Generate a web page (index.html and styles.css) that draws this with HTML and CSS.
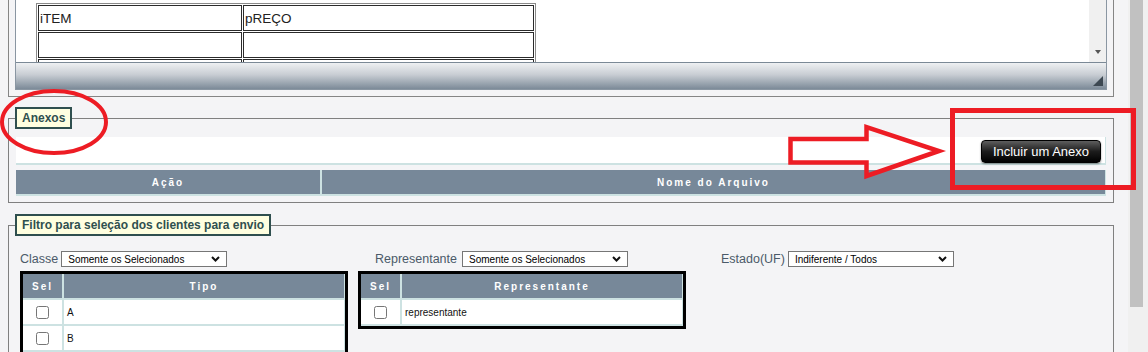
FILE: index.html
```html
<!DOCTYPE html>
<html lang="pt-BR">
<head>
  <meta charset="UTF-8">
  <meta name="viewport" content="width=device-width, initial-scale=1.0">
  <title>Anexos e Filtro</title>
  <link rel="stylesheet" href="styles.css">
</head>
<body>
  <div class="window">
    <div class="page">

      <!-- Editor (scrolled, top cut off) -->
      <div class="editor-frame">
        <div class="editor">
          <div class="editor-body">
            <div class="editor-content">
              <table class="doc-table">
                <tr><td class="doc-item">iTEM</td><td>pREÇO</td></tr>
                <tr><td></td><td></td></tr>
                <tr><td></td><td></td></tr>
              </table>
            </div>
            <div class="editor-scroll"><span class="arrow-down"></span></div>
          </div>
          <div class="editor-bar"><span class="grip"></span></div>
        </div>
      </div>

      <!-- Anexos -->
      <fieldset class="box">
        <legend>Anexos</legend>
        <div class="anexo-bar">
          <button class="btn-dark" type="button">Incluir um Anexo</button>
        </div>
        <table class="grid files">
          <tr><th class="col-acao">Ação</th><th>Nome do Arquivo</th></tr>
        </table>
      </fieldset>

      <!-- Filtro -->
      <fieldset class="box filter">
        <legend>Filtro para seleção dos clientes para envio</legend>
        <div class="filter-grid">
          <div class="filter-col">
            <div class="field">
              <span class="field-label">Classe</span>
              <span class="select-wrap">
                <select class="select"><option>Somente os Selecionados</option></select>
                <svg class="chevron" width="9" height="6" viewBox="0 0 9 6"><path d="M1 1l3.5 3.5L8 1" fill="none" stroke="#111" stroke-width="2"/></svg>
              </span>
            </div>
            <table class="grid pick">
              <tr><th class="col-sel">Sel</th><th>Tipo</th></tr>
              <tr><td class="col-sel"><input type="checkbox"></td><td>A</td></tr>
              <tr><td class="col-sel"><input type="checkbox"></td><td>B</td></tr>
            </table>
          </div>

          <div class="filter-col col-rep">
            <div class="field">
              <span class="field-label">Representante</span>
              <span class="select-wrap">
                <select class="select"><option>Somente os Selecionados</option></select>
                <svg class="chevron" width="9" height="6" viewBox="0 0 9 6"><path d="M1 1l3.5 3.5L8 1" fill="none" stroke="#111" stroke-width="2"/></svg>
              </span>
            </div>
            <table class="grid pick">
              <tr><th class="col-sel">Sel</th><th>Representante</th></tr>
              <tr><td class="col-sel"><input type="checkbox"></td><td>representante</td></tr>
            </table>
          </div>

          <div class="filter-col">
            <div class="field">
              <span class="field-label">Estado(UF)</span>
              <span class="select-wrap">
                <select class="select"><option>Indiferente / Todos</option></select>
                <svg class="chevron" width="9" height="6" viewBox="0 0 9 6"><path d="M1 1l3.5 3.5L8 1" fill="none" stroke="#111" stroke-width="2"/></svg>
              </span>
            </div>
          </div>
        </div>
      </fieldset>

    </div>

    <div class="scrollbar"><div class="thumb"></div></div>

    <!-- Red annotations drawn over the page -->
    <svg class="marks" width="1148" height="352" viewBox="0 0 1148 352">
      <ellipse cx="54" cy="122" rx="52" ry="31" fill="none" stroke="#ed1c24" stroke-width="4"/>
      <polygon points="790.5,139 866.5,139 866.5,127 939,151 866.5,176 866.5,162.5 790.5,162.5" fill="none" stroke="#ed1c24" stroke-width="4.5"/>
      <rect x="952.5" y="110.5" width="181" height="77" fill="none" stroke="#ed1c24" stroke-width="5"/>
    </svg>
  </div>
</body>
</html>
```

FILE: styles.css
```css
body {
  margin: 0;
  font-family: 'Liberation Sans', Arial, sans-serif;
  background-color: #f4f4f6;
}

.window {
  position: relative;
  display: flex;
  height: 100vh;
  overflow: hidden;
}

.page {
  flex: 1;
  overflow: hidden;
}

/* Editor block */
.editor-frame {
  margin: 0 14px 0 8px;
  padding: 0 6px 6px 6px;
  border: 1px solid #858585;
  border-top: none;
}

.editor {
  border: 1px solid #8a96a2;
  border-top: none;
}

.editor-body {
  display: flex;
  height: 62px;
}

.editor-content {
  flex: 1;
  background-color: #fff;
  overflow: hidden;
  padding: 3px 0 0 20px;
}

.doc-table {
  width: 500px;
  border: 1px solid #8a8a8a;
  border-spacing: 1px;
}

.doc-table td {
  height: 24px;
  padding: 0 1px;
  border: 1px solid #2b2b2b;
  font-size: 13.5px;
  color: #222;
}

.doc-table .doc-item {
  width: 200px;
}

.editor-scroll {
  width: 17px;
  background-color: #f0f0f0;
  display: flex;
  flex-direction: column;
  justify-content: flex-end;
  align-items: center;
  padding-bottom: 8px;
  box-sizing: border-box;
}

.arrow-down {
  width: 0;
  height: 0;
  border-top: 4px solid #555;
  border-left: 3.5px solid transparent;
  border-right: 3.5px solid transparent;
}

.editor-bar {
  height: 23px;
  border-top: 1px solid #7b8996;
  background: linear-gradient(#eef0f2, #c8cdd3 45%, #7c8a98);
  display: flex;
  justify-content: flex-end;
  align-items: flex-end;
  padding: 0 3px 3px 0;
}

.grip {
  width: 0;
  height: 0;
  border-left: 10px solid transparent;
  border-bottom: 10px solid #3d4852;
}

/* Fieldsets */
.box {
  margin: 10px 14px 0 8px;
  padding: 8px 7px 6px 7px;
  border: 1px solid #808080;
  min-width: 0;
}

.box legend {
  margin-left: -1px;
  padding: 2px 5px;
  background-color: #ffffe0;
  border: 2px solid #2f4f4f;
  color: #2f4f4f;
  font-size: 12px;
  font-weight: bold;
  line-height: 14px;
}

.anexo-bar {
  display: flex;
  justify-content: flex-end;
  align-items: flex-start;
  height: 23px;
  padding: 3px 4px 0 0;
  background-color: #fff;
  border-bottom: 2px solid #cde2e2;
  border-right: 1px solid #cde2e2;
  margin-bottom: 5px;
}

.btn-dark {
  height: 23px;
  padding: 0 11px;
  font-family: 'Liberation Sans', Arial, sans-serif;
  font-size: 13px;
  color: #fff;
  background: linear-gradient(#5e5e5e, #1c1c1c 50%, #000);
  border: 1px solid #000;
  border-radius: 4px;
  box-shadow: 0 1px 2px rgba(0, 0, 0, 0.45);
  cursor: pointer;
}

/* Grids */
.grid {
  border-collapse: separate;
  border-spacing: 0;
}

.grid th,
.grid td {
  height: 24px;
  padding: 0;
  border-right: 2px solid #cde2e2;
  border-bottom: 2px solid #cde2e2;
}

.grid tr > :last-child {
  border-right-width: 1px;
}

.grid th {
  background-color: #778899;
  color: #fff;
  font-size: 10px;
  font-weight: bold;
  letter-spacing: 2px;
  text-align: center;
}

.grid td {
  background-color: #fff;
  font-size: 10px;
  color: #111;
  padding-left: 3px;
}

.files {
  width: 100%;
}

.files .col-acao {
  width: 304px;
}

/* Filter */
.filter {
  margin-top: 11px;
  padding-top: 15px;
  padding-bottom: 0;
}

.filter-grid {
  display: grid;
  grid-template-columns: 338px 363px 1fr;
  padding-left: 4px;
}

.field {
  display: flex;
  align-items: center;
  gap: 3px;
  height: 16px;
  margin-bottom: 4px;
}

.col-rep .field {
  padding-left: 17px;
  gap: 5px;
}

.field-label {
  font-size: 12.5px;
  color: #4b5a69;
}

.select-wrap {
  display: inline-flex;
  align-items: center;
}

.select {
  appearance: none;
  width: 166px;
  height: 16px;
  margin: 0;
  padding: 0 0 0 6px;
  border: 1px solid #767676;
  border-radius: 0;
  background-color: #fff;
  font-family: 'Liberation Sans', Arial, sans-serif;
  font-size: 10px;
  color: #000;
}

.chevron {
  margin-left: -16px;
  pointer-events: none;
}

.pick {
  width: 328px;
  border: 3px solid #000;
}

.pick th.col-sel {
  width: 39px;
}

.pick td.col-sel {
  text-align: center;
  padding-left: 0;
}

.pick input {
  width: 13px;
  height: 13px;
  margin: 0;
  vertical-align: middle;
}

/* Page scrollbar */
.scrollbar {
  width: 20px;
  padding: 0 5px 0 2px;
  box-sizing: border-box;
  background-color: #f0f0f0;
}

.thumb {
  height: 307px;
  background-color: #c1c1c1;
}

/* Red annotations */
.marks {
  position: absolute;
  top: 0;
  left: 0;
  pointer-events: none;
}
```
